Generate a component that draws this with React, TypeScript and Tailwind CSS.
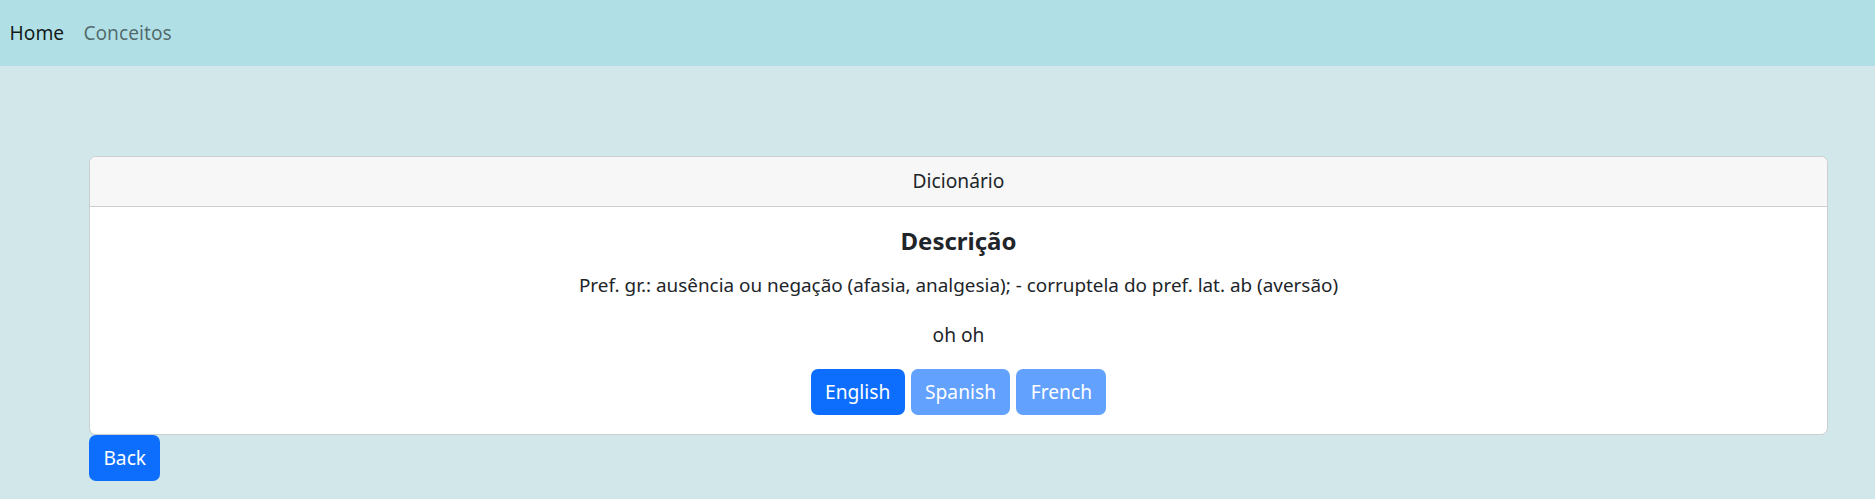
export default function App() {
  const langs = [
    { name: 'English', active: true },
    { name: 'Spanish', active: false },
    { name: 'French', active: false },
  ];

  return (
    <div className="min-h-[499px] bg-[#d1e7e9] font-['Noto_Sans',sans-serif] text-[19.2px] leading-[28.8px] text-[#212529]">
      <nav className="h-[66px] bg-[#b0e0e6] flex items-center">
        <a className="px-[9.6px] text-black/90">Home</a>
        <a className="px-[9.6px] text-black/55">Conceitos</a>
      </nav>

      <main className="pt-[90px] pl-[89px] pr-[47px]">
        <div className="bg-white border border-[#cbcfd0] rounded-[7px] overflow-hidden">
          <div className="h-[50px] bg-[#f7f7f7] border-b border-[#cbcfd0] flex items-center justify-center">
            Dicionário
          </div>
          <div className="pt-[20px] pb-[19px] text-center">
            <h5 className="text-[24px] leading-[28.8px] font-bold mb-[15px]">Descrição</h5>
            <p className="mb-[21px] text-[18.9px]">
              Pref. gr.: ausência ou negação (afasia, analgesia); - corruptela do pref. lat. ab (aversão)
            </p>
            <p className="mb-[20px]">oh oh</p>
            <div className="flex justify-center gap-[6px]">
              {langs.map((l) => (
                <button
                  key={l.name}
                  className={`h-[46px] px-[14.4px] rounded-[7px] text-white ${
                    l.active ? 'bg-[#0d6efd]' : 'bg-[#62a1fe]'
                  }`}
                >
                  {l.name}
                </button>
              ))}
            </div>
          </div>
        </div>
        <button className="h-[46px] px-[14.4px] rounded-[7px] bg-[#0d6efd] text-white">Back</button>
      </main>
    </div>
  );
}
